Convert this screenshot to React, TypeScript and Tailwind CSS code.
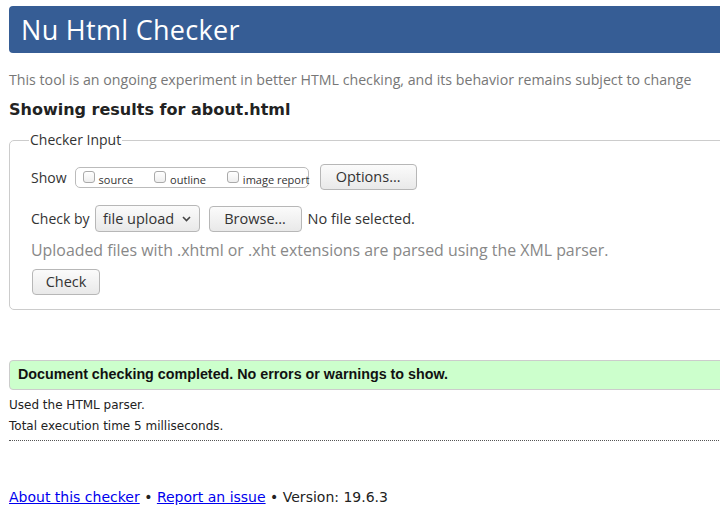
import type { ReactNode } from "react";

function Btn({ children, className = "" }: { children: ReactNode; className?: string }) {
  return (
    <span
      className={`inline-flex items-center justify-center rounded-[4px] border border-[#b7b7b7] bg-gradient-to-b from-[#fbfbfb] to-[#e9e9e9] text-[#333] text-[14.5px] ${className}`}
    >
      {children}
    </span>
  );
}

function Check({ label, className = "" }: { label: string; className?: string }) {
  return (
    <span className={`inline-flex items-center whitespace-nowrap ${className}`}>
      <span className="mr-[4px] inline-block size-[12px] shrink-0 rounded-[3px] border border-[#aaa] bg-gradient-to-b from-white to-[#eee]" />
      <span className="text-[11px] text-[#333] leading-none translate-y-[2px]">{label}</span>
    </span>
  );
}

export default function App() {
  const ui = "font-['Open_Sans',sans-serif]";
  return (
    <div className="h-[529px] w-[720px] overflow-hidden bg-white pl-[9px] font-['DejaVu_Sans',sans-serif] text-[#222]">
      <div className="w-[760px]">
        <div className="mt-[6px] flex h-[47px] items-center rounded-l-[4px] bg-[#365d95] pl-[12px]">
          <h1 className={`${ui} text-[27px] text-white leading-none tracking-[0.3px]`}>Nu Html Checker</h1>
        </div>

        <p className={`${ui} mt-[18px] text-[14.2px] leading-[18px] text-[#777]`}>
          This tool is an ongoing experiment in better HTML checking, and its behavior remains subject to change
        </p>

        <h2 className="mt-[11px] text-[16px] font-bold leading-[20px] text-[#222]">Showing results for about.html</h2>

        <fieldset className={`${ui} mt-[11px] h-[179px] rounded-[5px] border border-[#ccc] pb-0 pl-[21px] pr-0 pt-0`}>
          <legend className="ml-[-2px] px-[1px] text-[14px] leading-[18px] text-[#333]">Checker Input</legend>

          <div className="mt-[15px] flex h-[26px] items-center">
            <span className="text-[14px] text-[#333]">Show</span>
            <span className="ml-[8px] inline-flex h-[21px] w-[234px] items-center rounded-[5px] border border-[#bbb] pl-[7px]">
              <Check label="source" />
              <Check label="outline" className="ml-[21px]" />
              <Check label="image report" className="ml-[21px]" />
            </span>
            <Btn className="ml-[11px] h-[26px] w-[97px]">Options…</Btn>
          </div>

          <div className="mt-[15px] flex h-[27px] items-center">
            <span className="text-[14px] text-[#333]">Check by</span>
            <Btn className="ml-[5px] h-[27px] w-[105px] gap-[8px]">
              file upload
              <svg width="9" height="6" viewBox="0 0 9 6" className="mt-[1px]">
                <path d="M1 1l3.5 3.5L8 1" fill="none" stroke="#444" strokeWidth="1.6" />
              </svg>
            </Btn>
            <Btn className="ml-[9px] h-[26px] w-[93px]">Browse…</Btn>
            <span className="ml-[6px] text-[14.5px] text-[#333]">No file selected.</span>
          </div>

          <p className="mt-[8px] text-[15.9px] leading-[20px] text-[#888]">
            Uploaded files with .xhtml or .xht extensions are parsed using the XML parser.
          </p>

          <Btn className="ml-[1px] mt-[9px] h-[26px] w-[68px]">Check</Btn>
        </fieldset>

        <div className="mt-[50px] flex h-[30px] items-center rounded-l-[4px] border border-[#ccc] bg-[#ccffcc] pl-[8px] font-['Liberation_Sans',sans-serif] text-[14.3px] font-bold text-[#111]">
          Document checking completed. No errors or warnings to show.
        </div>

        <p className="mt-[5px] text-[12px] leading-[21px] text-[#222]">Used the HTML parser.</p>
        <p className="text-[12px] leading-[21px] text-[#222]">Total execution time 5 milliseconds.</p>
        <div className="mt-[3px] border-t border-dotted border-[#555]" />

        <p className="mt-[46px] text-[14px] leading-[20px] text-[#222]">
          <a className="text-[#0000ee] underline">About this checker</a> •{" "}
          <a className="text-[#0000ee] underline">Report an issue</a> • Version: 19.6.3
        </p>
      </div>
    </div>
  );
}
